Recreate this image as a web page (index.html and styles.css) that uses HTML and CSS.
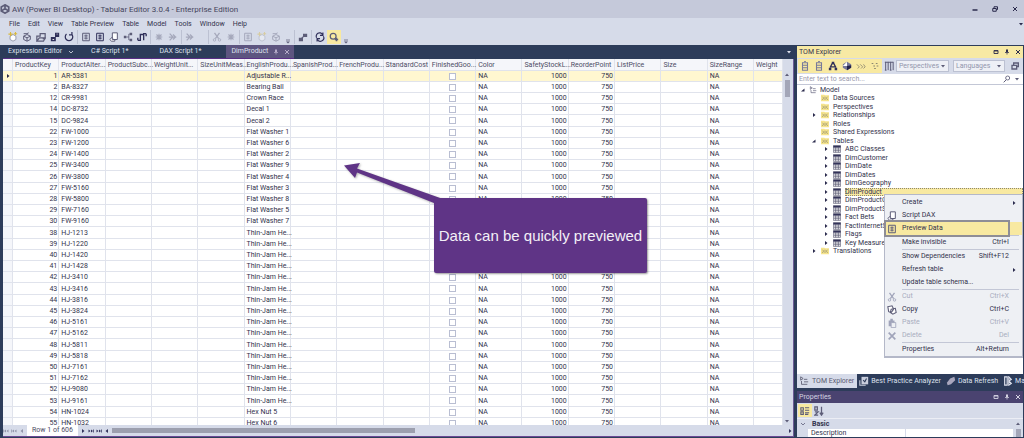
FILE: index.html
```html
<!DOCTYPE html>
<html lang="en">
<head>
<meta charset="utf-8">
<title>AW (Power BI Desktop) - Tabular Editor 3.0.4 - Enterprise Edition</title>
<link rel="stylesheet" href="styles.css">
</head>
<body>
<svg class="defs" aria-hidden="true">
  <symbol id="i-logo" viewBox="0 0 12 12"><path d="M6 1l4.500 2.500v5L6 11 1.500 8.500v-5z M6 1v4.500M1.500 8.500L6 5.500l4.500 3" fill="none" stroke="currentColor" stroke-width="2"/></symbol>
  <symbol id="i-new" viewBox="0 0 12 12"><path d="M6 3l3.500 2v4L6 11 2.500 9V5z" fill="#fff" stroke="#8a8ea2"/><path d="M3 0v5M.5 2.500h5M7 2h4M9 0v4" stroke="#d9b83c" stroke-width="1.300"/></symbol>
  <symbol id="i-cube" viewBox="0 0 12 12"><path d="M6 3l4 2v4l-4 2-4-2V5zM2 5l4 2 4-2M6 7v4M2 2h4l2-1" fill="none" stroke="currentColor" stroke-width="1.200"/></symbol>
  <symbol id="i-open" viewBox="0 0 12 12"><path d="M1 11V5h4V2h6v6H8M1 11h8l2-4H4z" fill="none" stroke="currentColor" stroke-width="1.500"/></symbol>
  <symbol id="i-save" viewBox="0 0 12 12"><path d="M6 1h5v5H6zM1 6h6v5H1z" fill="currentColor"/><path d="M3 9h2M8 2.500h1" stroke="#fff"/></symbol>
  <symbol id="i-refresh" viewBox="0 0 12 12"><path d="M3 2.500a4.500 4.500 0 1 0 6 0M9.500 0v3.500H6" fill="none" stroke="currentColor" stroke-width="1.500"/></symbol>
  <symbol id="i-script" viewBox="0 0 12 12"><path d="M2 1.500h8v9H2z" fill="none" stroke="currentColor" stroke-width="1.200"/><path d="M4 4h4M4 6h4M4 8h4M6 3v6" stroke="currentColor"/></symbol>
  <symbol id="i-doc" viewBox="0 0 12 12"><path d="M4 1h6v8H4zM4 6L1 9l2 2h4V9" fill="#fff" stroke="currentColor" stroke-width="1.200"/></symbol>
  <symbol id="i-diagram" viewBox="0 0 12 12"><path d="M1 4.500h3v3H1zM8 1h3v3H8zM8 8h3v3H8z" fill="currentColor"/><path d="M4 6h3M8 2.500H7v7h1" fill="none" stroke="currentColor"/></symbol>
  <symbol id="i-pivot" viewBox="0 0 12 12"><path d="M1 10h3V3h4M8 10V2h3M1 10V7M11 2v3" fill="none" stroke="currentColor" stroke-width="1.600"/></symbol>
  <symbol id="i-cut" viewBox="0 0 12 12"><path d="M3 1l5 7M9 1L4 8" stroke="currentColor" stroke-width="1.500"/><circle cx="3" cy="9.500" r="1.500" fill="none" stroke="currentColor"/><circle cx="9" cy="9.500" r="1.500" fill="none" stroke="currentColor"/></symbol>
  <symbol id="i-copy" viewBox="0 0 12 12"><path d="M1 2l5-1 2 4-3 4-3-1zM5 5l5-1 1 5-4 2-3-2z" fill="#fff" stroke="currentColor" stroke-width="1.300"/></symbol>
  <symbol id="i-paste" viewBox="0 0 12 12"><path d="M2 3h7v7H2zM4 1h3v2H4z" fill="currentColor"/><path d="M5 5.500h5.500v6H5z" fill="#eef0f4" stroke="currentColor"/></symbol>
  <symbol id="i-x" viewBox="0 0 12 12"><path d="M2 2l8 8M10 2l-8 8" stroke="currentColor" stroke-width="2"/></symbol>
  <symbol id="i-gray" viewBox="0 0 12 12"><path d="M2 2l4 4-4 4M6 3l3 3-3 3M1 6h9" fill="none" stroke="currentColor" stroke-width="1.500"/></symbol>
  <symbol id="i-burst" viewBox="0 0 12 12"><path d="M6 2v8M2 6h8M3 3l6 6M9 3L3 9" stroke="currentColor" stroke-width="1.300"/></symbol>
  <symbol id="i-link" viewBox="0 0 12 12"><path d="M1 7h5v4H1zM6 2h5v4H6z" fill="currentColor"/><path d="M4 8l4-4" stroke="currentColor" stroke-width="1.500"/></symbol>
  <symbol id="i-sync" viewBox="0 0 12 12"><path d="M2 7a4 4 0 0 1 7-4M10 5a4 4 0 0 1-7 4M9.500.5V4H6M2.500 11.500V8H6" fill="none" stroke="currentColor" stroke-width="1.400"/></symbol>
  <symbol id="i-find" viewBox="0 0 12 12"><circle cx="5" cy="5" r="3.500" fill="none" stroke="currentColor" stroke-width="1.500"/><path d="M7 9h4M9 7v4" stroke="currentColor" stroke-width="1.800"/></symbol>
  <symbol id="i-drop" viewBox="0 0 12 12"><path d="M2 4h8l-4 5z" fill="currentColor"/></symbol>
  <symbol id="i-more" viewBox="0 0 12 12"><path d="M2 4h8" stroke="currentColor" stroke-width="1.500"/><path d="M2 7h8l-4 4z" fill="currentColor"/></symbol>
  <symbol id="i-right" viewBox="0 0 12 12"><path d="M4 2v8l5-4z" fill="currentColor"/></symbol>
  <symbol id="i-left" viewBox="0 0 12 12"><path d="M8 2v8L3 6z" fill="currentColor"/></symbol>
  <symbol id="i-next" viewBox="0 0 12 12"><path d="M1 3v6l4-3zM6 3v6l4-3z" fill="currentColor"/><path d="M11 3v6" stroke="currentColor" stroke-width="1.500"/></symbol>
  <symbol id="i-prev" viewBox="0 0 12 12"><path d="M11 3v6L7 6zM6 3v6L2 6z" fill="currentColor"/><path d="M1 3v6" stroke="currentColor" stroke-width="1.500"/></symbol>
  <symbol id="i-up" viewBox="0 0 12 12"><path d="M2 8h8L6 3z" fill="currentColor"/></symbol>
  <symbol id="i-open-node" viewBox="0 0 12 12"><path d="M9 3v6H2z" fill="currentColor"/></symbol>
  <symbol id="i-min" viewBox="0 0 12 12"><path d="M1 8h10" stroke="currentColor" stroke-width="3"/></symbol>
  <symbol id="i-restore" viewBox="0 0 12 12"><path d="M4 4V1.500h7V7H8.500M1.500 5h7v5.500h-7z" fill="none" stroke="currentColor" stroke-width="2"/></symbol>
  <symbol id="i-window" viewBox="0 0 12 12"><path d="M2 3h8v6H2zM2 4h8" fill="none" stroke="currentColor" stroke-width="1.800"/></symbol>
  <symbol id="i-pin" viewBox="0 0 12 12"><path d="M4 1h4v5H4z" fill="currentColor"/><path d="M2 7h8M6 7v4" stroke="currentColor" stroke-width="1.500"/></symbol>
  <symbol id="i-db" viewBox="0 0 12 12"><path d="M3 2h6v9H3zM3 5h6M3 8h6M5 .5h2" fill="none" stroke="#77799a" stroke-width="1.300"/></symbol>
  <symbol id="i-hier" viewBox="0 0 12 12"><path d="M4.500 1h3v3h-3zM1 8h3v3H1zM8 8h3v3H8z" fill="currentColor"/><path d="M5 3L2.500 8M7 3l2.500 5M3 7h6" stroke="currentColor" stroke-width="1.600"/></symbol>
  <symbol id="i-ball" viewBox="0 0 12 12"><path d="M6 1l5 3v4l-5 3-5-3V4z" fill="#77799a"/><path d="M1 6l5-5v5z" fill="#fff"/><path d="M6 6l5-1v3l-5 3z" fill="#22224a"/></symbol>
  <symbol id="i-dots" viewBox="0 0 12 12"><path d="M1 4l3 3-2 2M5 4l3 3-2 2M9 4l2 3-2 2" fill="none" stroke="#8a8670"/></symbol>
  <symbol id="i-dots2" viewBox="0 0 12 12"><path d="M2 3h2M7 3h2M4 6h2M8 6h2M5 9h2" fill="none" stroke="#8a8670" stroke-width="1.300"/></symbol>
  <symbol id="i-cols" viewBox="0 0 12 12"><path d="M1 1.500h10M2 1v10M5 1v10M8 1v10M11 1v10M1 11h2M7 11h2" stroke="currentColor" stroke-width="1.200"/></symbol>
  <symbol id="i-folder" viewBox="0 0 12 12"><path d="M0 1h5l1 1h6v9H0z" fill="#f6e48c"/><path d="M2 4l2 2-2 3M6 4v5M10 4L8 6l2 3" fill="none" stroke="#8a8670"/></symbol>
  <symbol id="i-table" viewBox="0 0 12 12"><path d="M.5 1h11v10H.5z" fill="#fff" stroke="#54546e"/><path d="M.5 2.500h11" stroke="#34345a" stroke-width="3"/><path d="M4 3v8M8 3v8M1 6h10M1 8.500h10" stroke="#54546e"/></symbol>
  <symbol id="i-model" viewBox="0 0 12 12"><path d="M2 1l3 2-3 2zM3 6v4h3M6 7h5M6 10h4M6 4h4" fill="none" stroke="currentColor"/></symbol>
  <symbol id="i-check" viewBox="0 0 12 12"><path d="M3 1h8v9H3z" fill="#c9cedd"/><path d="M5 5l2 2 2-4" fill="none" stroke="#2d3c5a" stroke-width="1.300"/><path d="M1 5v6h7" fill="none" stroke="#c9cedd" stroke-width="1.300"/></symbol>
  <symbol id="i-data" viewBox="0 0 12 12"><path d="M1 8l4-5 5-2 1 4-5 5-4 1z" fill="#a9a7bd"/></symbol>
  <symbol id="i-macro" viewBox="0 0 12 12"><path d="M2 1h3v10H2zM7 1l3 3-3 2 3 3-3 2z" fill="none" stroke="currentColor" stroke-width="1.400"/></symbol>
  <symbol id="i-cat" viewBox="0 0 12 12"><path d="M1 2h3v3H1zM1 7h3v3H1zM6 2h5M6 5h5M6 8h5M6 10h4" fill="none" stroke="currentColor" stroke-width="1.300"/></symbol>
  <symbol id="i-sort" viewBox="0 0 12 12"><path d="M1 1h3v4H1zM1 7h4l-4 4h4M9 1v9M7 8l2 3 2-3" fill="none" stroke="currentColor" stroke-width="1.500"/></symbol>
  <symbol id="i-search" viewBox="0 0 12 12"><circle cx="7" cy="4.500" r="3" fill="none" stroke="currentColor" stroke-width="1.300"/><path d="M5 7l-4 4" stroke="currentColor" stroke-width="1.500"/></symbol>
  <symbol id="i-chev" viewBox="0 0 12 12"><path d="M2 4l4 4 4-4" fill="none" stroke="currentColor" stroke-width="1.600"/></symbol>
</svg>

<div class="window">
  <header class="titlebar">
    <svg class="icon"><use href="#i-logo"/></svg>
    <h1>AW (Power BI Desktop) - Tabular Editor 3.0.4 - Enterprise Edition</h1>
    <div class="window-buttons">
      <button aria-label="Minimize"><svg class="icon tiny"><use href="#i-min"/></svg></button>
      <button aria-label="Restore"><svg class="icon tiny"><use href="#i-restore"/></svg></button>
      <button aria-label="Close"><svg class="icon tiny"><use href="#i-x"/></svg></button>
    </div>
  </header>

  <nav class="menubar">
    <button>File</button><button>Edit</button><button>View</button><button>Table Preview</button><button>Table</button><button>Model</button><button>Tools</button><button>Window</button><button>Help</button>
    <svg class="icon tiny overflow"><use href="#i-drop"/></svg>
  </nav>

  <div class="toolbar" role="toolbar" aria-label="Main">
    <div class="group">
      <button aria-label="New"><svg class="icon"><use href="#i-new"/></svg></button>
      <button aria-label="Open model"><svg class="icon"><use href="#i-cube"/></svg></button>
      <button aria-label="Open file"><svg class="icon"><use href="#i-open"/></svg></button>
      <button aria-label="Save"><svg class="icon strong"><use href="#i-save"/></svg></button>
      <button aria-label="Refresh"><svg class="icon strong"><use href="#i-refresh"/></svg></button>
    </div>
    <div class="group">
      <button aria-label="New script"><svg class="icon"><use href="#i-script"/></svg></button>
      <button aria-label="New query"><svg class="icon strong"><use href="#i-script"/></svg></button>
      <button aria-label="New document"><svg class="icon"><use href="#i-doc"/></svg></button>
      <button aria-label="New diagram"><svg class="icon"><use href="#i-diagram"/></svg></button>
      <button aria-label="New pivot"><svg class="icon strong"><use href="#i-pivot"/></svg></button>
    </div>
    <div class="group faded">
      <button aria-label="Undo"><svg class="icon"><use href="#i-burst"/></svg></button>
      <button aria-label="Redo"><svg class="icon"><use href="#i-gray"/></svg></button>
    </div>
    <div class="group faded wide">
      <button aria-label="Run"><svg class="icon"><use href="#i-gray"/></svg></button>
    </div>
    <div class="group faded">
      <button aria-label="Cut"><svg class="icon"><use href="#i-cut"/></svg></button>
      <button aria-label="Delete"><svg class="icon"><use href="#i-burst"/></svg></button>
    </div>
    <div class="group faded">
      <button aria-label="Back"><svg class="icon"><use href="#i-script"/></svg></button>
      <button aria-label="Step"><svg class="icon"><use href="#i-new"/></svg></button>
      <button aria-label="Continue"><svg class="icon"><use href="#i-cube"/></svg></button>
      <button class="slim" aria-label="More"><svg class="icon tiny"><use href="#i-more"/></svg></button>
    </div>
    <div class="group">
      <button aria-label="Connect"><svg class="icon"><use href="#i-link"/></svg></button>
    </div>
    <div class="group">
      <button aria-label="Reload"><svg class="icon strong"><use href="#i-sync"/></svg></button>
      <button class="on" aria-label="Auto refresh"><svg class="icon"><use href="#i-find"/></svg></button>
      <button class="slim" aria-label="More"><svg class="icon tiny"><use href="#i-more"/></svg></button>
    </div>
  </div>

  <main class="workspace">
    <section class="documents">
      <div class="doc-tabs" role="tablist">
        <button role="tab" class="first">Expression Editor <svg class="icon tiny"><use href="#i-chev"/></svg></button>
        <button role="tab">C# Script 1*</button>
        <button role="tab">DAX Script 1*</button>
        <button role="tab" class="active">DimProduct <svg class="icon tiny"><use href="#i-pin"/></svg><svg class="icon tiny"><use href="#i-x"/></svg></button>
        <svg class="icon tiny overflow"><use href="#i-drop"/></svg>
      </div>
      <div class="preview">
        <div class="grid-scroll">
          <table class="grid">
            <colgroup><col class="c-mark"><col span="16"><col class="c-last"></colgroup>
            <thead><tr><th></th><th>ProductKey</th><th>ProductAlter...</th><th>ProductSubc...</th><th>WeightUnit...</th><th>SizeUnitMeas...</th><th>EnglishProdu...</th><th>SpanishProd...</th><th>FrenchProdu...</th><th>StandardCost</th><th>FinishedGoo...</th><th>Color</th><th>SafetyStockL...</th><th>ReorderPoint</th><th>ListPrice</th><th>Size</th><th>SizeRange</th><th>Weight</th></tr></thead>
            <tbody id="rows"></tbody>
          </table>
        </div>
        <div class="vscroll">
          <svg class="icon tiny"><use href="#i-up"/></svg>
          <span class="thumb"></span>
          <svg class="icon tiny bottom"><use href="#i-drop"/></svg>
        </div>
        <div class="navigator">
          <button disabled aria-label="First"><svg class="icon tiny"><use href="#i-prev"/></svg></button>
          <button disabled aria-label="Previous page"><svg class="icon tiny"><use href="#i-prev"/></svg></button>
          <button disabled aria-label="Previous"><svg class="icon tiny"><use href="#i-left"/></svg></button>
          <span class="position">Row 1 of 606</span>
          <button aria-label="Next"><svg class="icon tiny"><use href="#i-right"/></svg></button>
          <button aria-label="Next page"><svg class="icon tiny"><use href="#i-next"/></svg></button>
          <button aria-label="Last"><svg class="icon tiny"><use href="#i-next"/></svg></button>
          <button aria-label="Scroll left"><svg class="icon tiny"><use href="#i-left"/></svg></button>
          <span class="track"><span class="thumb"></span></span>
          <button aria-label="Scroll right"><svg class="icon tiny"><use href="#i-right"/></svg></button>
        </div>
      </div>
    </section>

    <aside class="side">
      <section class="explorer">
        <header class="panel-title"><h2>TOM Explorer</h2>
          <svg class="icon tiny"><use href="#i-window"/></svg><svg class="icon tiny"><use href="#i-pin"/></svg><svg class="icon tiny"><use href="#i-x"/></svg>
        </header>
        <div class="panel-tools" role="toolbar" aria-label="Explorer">
          <div class="toggles">
            <button aria-label="Measures"><svg class="icon"><use href="#i-db"/></svg></button>
            <button aria-label="Columns"><svg class="icon"><use href="#i-db"/></svg></button>
            <button aria-label="Hierarchies"><svg class="icon strong"><use href="#i-hier"/></svg></button>
            <button aria-label="Partitions"><svg class="icon"><use href="#i-ball"/></svg></button>
            <button aria-label="Folders"><svg class="icon"><use href="#i-dots"/></svg></button>
            <button aria-label="Hidden"><svg class="icon"><use href="#i-dots2"/></svg></button>
          </div>
          <button aria-label="Show columns"><svg class="icon"><use href="#i-cols"/></svg></button>
          <span class="picker"><select aria-label="Perspectives"><option>Perspectives</option></select><svg class="icon tiny"><use href="#i-drop"/></svg></span>
          <span class="picker"><select aria-label="Languages"><option>Languages</option></select><svg class="icon tiny"><use href="#i-drop"/></svg></span>
          <button class="copies" aria-label="Copies"><svg class="icon small"><use href="#i-restore"/></svg></button>
        </div>
        <div class="search">
          <input type="text" aria-label="Search" placeholder="Enter text to search...">
          <svg class="icon small"><use href="#i-search"/></svg><svg class="icon tiny"><use href="#i-drop"/></svg>
        </div>
        <ul class="tree" id="tree"></ul>
      </section>

      <div class="panel-tabs" role="tablist">
        <button role="tab" class="active"><svg class="icon"><use href="#i-model"/></svg>TOM Explorer</button>
        <button role="tab"><svg class="icon"><use href="#i-check"/></svg>Best Practice Analyzer</button>
        <button role="tab"><svg class="icon"><use href="#i-data"/></svg>Data Refresh</button>
        <button role="tab"><svg class="icon"><use href="#i-macro"/></svg>Macros</button>
      </div>

      <section class="properties">
        <header class="panel-title dark"><h2>Properties</h2>
          <svg class="icon tiny"><use href="#i-window"/></svg><svg class="icon tiny"><use href="#i-pin"/></svg><svg class="icon tiny"><use href="#i-x"/></svg>
        </header>
        <div class="prop-tools">
          <button class="on" aria-label="Categorized"><svg class="icon"><use href="#i-cat"/></svg></button>
          <button aria-label="Alphabetical"><svg class="icon"><use href="#i-sort"/></svg></button>
        </div>
        <div class="prop-body">
          <div class="prop-list">
            <div class="category"><svg class="icon tiny"><use href="#i-chev"/></svg>Basic</div>
            <div class="prop"><label for="description">Description</label><input id="description" type="text"></div>
          </div>
          <div class="vscroll"><svg class="icon tiny"><use href="#i-up"/></svg><span class="thumb"></span></div>
        </div>
      </section>
    </aside>
  </main>

  <div class="context-menu" role="menu">
    <button role="menuitem"><span class="gutter"></span>Create<svg class="icon tiny arrow"><use href="#i-right"/></svg></button>
    <button role="menuitem"><span class="gutter"><svg class="icon"><use href="#i-doc"/></svg></span>Script DAX</button>
    <button role="menuitem" class="hot"><span class="gutter"><svg class="icon"><use href="#i-script"/></svg></span>Preview Data</button>
    <hr>
    <button role="menuitem"><span class="gutter"></span>Make invisible<kbd>Ctrl+I</kbd></button>
    <hr>
    <button role="menuitem"><span class="gutter"></span>Show Dependencies<kbd>Shift+F12</kbd></button>
    <button role="menuitem"><span class="gutter"></span>Refresh table<svg class="icon tiny arrow"><use href="#i-right"/></svg></button>
    <button role="menuitem"><span class="gutter"></span>Update table schema...</button>
    <hr>
    <button role="menuitem" disabled><span class="gutter"><svg class="icon"><use href="#i-cut"/></svg></span>Cut<kbd>Ctrl+X</kbd></button>
    <button role="menuitem"><span class="gutter"><svg class="icon"><use href="#i-copy"/></svg></span>Copy<kbd>Ctrl+C</kbd></button>
    <button role="menuitem" disabled><span class="gutter"><svg class="icon"><use href="#i-paste"/></svg></span>Paste<kbd>Ctrl+V</kbd></button>
    <button role="menuitem" disabled><span class="gutter"><svg class="icon"><use href="#i-x"/></svg></span>Delete<kbd>Del</kbd></button>
    <hr>
    <button role="menuitem"><span class="gutter"></span>Properties<kbd>Alt+Return</kbd></button>
  </div>

  <svg class="pointer" viewBox="0 0 108 44" aria-hidden="true"><path d="M3 6.500L19 4l-3 5.500L102 40v4H93L16 13.500 14 19z" fill="#5f3486"/></svg>
  <div class="callout">Data can be quickly previewed</div>
</div>
<script src="app.js"></script>
</body>
</html>
```

FILE: styles.css
```css
* { box-sizing: border-box; }

html, body { height: 100%; }

body {
  margin: 0;
  font-family: Roboto, "Open Sans", sans-serif;
  font-size: 7px;
  line-height: 11px;
  color: #32324c;
  background: #2d3c5a;
  overflow: hidden;
}

button, input, select {
  font: inherit;
  color: inherit;
  margin: 0;
  padding: 0;
  border: 0;
  background: none;
}

h1, h2 { margin: 0; font-weight: 400; font-size: inherit; }

.defs { display: none; }
.icon { width: 10px; height: 10px; flex: none; color: #5d5d78; }
.icon.small { width: 8px; height: 8px; }
.icon.tiny { width: 6px; height: 6px; }
.icon.strong { color: #30305a; }

.window { position: relative; display: flex; flex-direction: column; height: 100%; }

.titlebar {
  display: flex;
  align-items: center;
  gap: 2px;
  height: 18px;
  flex: none;
  padding: 0 6px 0 0;
  background: #c5c9da;
  color: #45455c;
}
.titlebar h1 { font-size: 8px; flex: 1; }
.window-buttons { display: flex; gap: 14px; }
.window-buttons button { display: flex; }
.window-buttons .icon { color: #2a2a4c; }

.menubar {
  display: flex;
  align-items: center;
  gap: 8px;
  height: 12px;
  flex: none;
  padding: 0 0 0 9px;
  background: #d6dbe9;
}
.overflow { margin-left: auto; color: #2a2a4c; }

.toolbar {
  display: flex;
  align-items: center;
  height: 15px;
  flex: none;
  padding: 0 0 1px 5px;
  background: #d6dbe9;
}
.group { display: flex; padding: 0 1px; }
.group + .group { border-left: 1px solid #bcc1d2; }
.group button {
  width: 14px;
  height: 14px;
  display: flex;
  align-items: center;
  justify-content: center;
}
.group button.slim { width: 10px; align-items: flex-end; }
.group.faded .icon { opacity: 0.4; }
.group.faded .icon.tiny { opacity: 1; }
.group.wide { padding-right: 11px; }
.group button.on, .on { background: #f8e9a1; }

.workspace {
  flex: 1;
  min-height: 0;
  display: grid;
  grid-template-columns: minmax(0, 1fr) 226px;
  gap: 3px;
  padding: 0 1px 1px 3px;
}

.documents { display: flex; flex-direction: column; min-height: 0; }
.doc-tabs {
  display: flex;
  align-items: center;
  height: 14px;
  flex: none;
  color: #dfe2ee;
}
.doc-tabs button {
  display: flex;
  align-items: center;
  gap: 6px;
  height: 14px;
  padding: 0 24px 0 7px;
  white-space: nowrap;
  border-bottom: 1px solid #5a2f86;
}
.doc-tabs .icon { color: #dfe2ee; }
.doc-tabs .overflow { margin-right: 2px; }
.doc-tabs button.first { padding: 0 10px 0 5px; }
.doc-tabs button.active { padding: 0 4px 0 6px; background: #5d5580; gap: 5px; }
.doc-tabs button.active .icon { color: #b5abc9; }

.preview {
  flex: 1;
  min-height: 0;
  display: grid;
  grid-template-columns: minmax(0, 1fr) 10px;
  grid-template-rows: minmax(0, 1fr) 11px;
  border-right: 1px solid #6b5a94;
  border-bottom: 1px solid #6b4a94;
  background: #d6dbe9;
}
.grid-scroll { overflow: hidden; background: #fff; }

.grid { width: 100%; table-layout: fixed; border-collapse: separate; border-spacing: 0; }
.c-mark { width: 10px; }
.c-last { width: 29px; }
.grid th, .grid td {
  height: 11px;
  padding: 0 0 0 2px;
  line-height: 10px;
  font-weight: 400;
  text-align: left;
  white-space: nowrap;
  border-right: 1px solid #e0e3ec;
  border-bottom: 1px solid #e0e3ec;
}
.grid th { height: 12px; background: #f5f6fa; color: #4c4c64; }
.grid tr:nth-child(5n) td { height: 12px; }
.grid .num { text-align: right; padding-right: 1px; }
.grid .mark { padding: 0; text-align: center; background: #f5f6fa; }
.grid .mark .icon { display: block; margin: auto; color: #2a2a4c; }
.grid .current td { background: #fff7d0; }
.grid .flag { padding: 0; }
.grid input {
  appearance: none;
  display: block;
  width: 7px;
  height: 7px;
  margin: auto;
  border: 1px solid #b9bed2;
  background: #fff;
}

.vscroll {
  display: flex;
  flex-direction: column;
  align-items: center;
  gap: 2px;
  padding: 13px 2px 1px 0;
}
.vscroll .thumb { width: 5px; height: 17px; background: #a3a6b8; }
.vscroll .bottom { margin-top: auto; }

.navigator {
  grid-column: 1 / -1;
  display: flex;
  align-items: center;
  gap: 2px;
}
.navigator button { display: flex; width: 6px; }
.navigator button .icon { color: #33335c; }
.navigator button:disabled .icon { color: #9195aa; }
.position { padding: 0 5px; background: #fff; color: #4c4c64; white-space: nowrap; }
.track { flex: 1; height: 5px; }
.track .thumb { display: block; width: 45%; height: 5px; background: #9c9fae; }

.side { display: flex; flex-direction: column; min-height: 0; padding-top: 1px; }
.explorer { display: flex; flex-direction: column; flex: 1; min-height: 0; background: #fff; }
.panel-title {
  display: flex;
  align-items: center;
  gap: 5px;
  height: 12px;
  flex: none;
  padding: 0 2px;
  background: #f7e9a4;
}
.panel-title h2 { flex: 1; }
.panel-title .icon { color: #2a2a4c; }
.panel-title.dark { background: #4a4370; color: #d5d3e2; }
.panel-title.dark .icon { color: #d5d3e2; }

.panel-tools {
  display: flex;
  align-items: center;
  gap: 2px;
  height: 16px;
  flex: none;
  padding: 0 0 0 1px;
  background: #d6dbe9;
}
.panel-tools button, .prop-tools button {
  display: flex;
  align-items: center;
  justify-content: center;
}
.panel-tools .copies { width: 16px; }
.toggles { display: flex; height: 14px; background: #f8e9a1; }
.toggles button { width: 14px; }
.picker {
  flex: 1;
  display: flex;
  align-items: center;
  height: 12px;
  padding-right: 2px;
  background: #eef0f6;
  border: 1px solid #bcc1d2;
}
.picker + .picker { margin-left: 2px; }
.picker select { appearance: none; flex: 1; min-width: 0; padding-left: 2px; color: #9296ac; line-height: 10px; }

.search { display: flex; align-items: center; gap: 3px; height: 11px; flex: none; padding: 0 3px 0 2px; border-bottom: 1px solid #c3c7d6; }
.search input { flex: 1; min-width: 0; outline: 0; }
.search input::placeholder { color: #9a9aae; opacity: 1; }

.tree { list-style: none; margin: 0; padding: 0; line-height: 8px; }
.tree li { display: flex; align-items: center; height: 9px; gap: 3px; padding-left: 3px; }
.tree li:nth-child(even) { height: 8px; }
.tree .icon { width: 8px; height: 8px; }
.tree .toggle { width: 6px; height: 6px; color: #2a2a4c; }
.tree .gap { width: 6px; flex: none; }
.tree .l1 { padding-left: 14px; gap: 4px; }
.tree .l2 { padding-left: 26px; gap: 4px; }
.tree .selected span { flex: 1; background: #f8e9a1; outline: 1px dotted #8f8870; outline-offset: -1px; }

.panel-tabs { display: flex; flex: none; height: 14px; color: #dfe2ee; }
.panel-tabs button { display: flex; align-items: center; gap: 2px; padding: 0 3px 0 2px; white-space: nowrap; }
.panel-tabs button .icon { color: #dfe2ee; }
.panel-tabs .active { gap: 3px; background: #d6dbe9; color: #5a5a70; }
.panel-tabs .active .icon { color: #5a5a70; }

.properties { flex: none; margin-top: 3px; background: #fff; }
.prop-tools { display: flex; height: 16px; padding: 1px; background: #d6dbe9; border-bottom: 1px solid #eceef5; }
.prop-tools button { width: 14px; }
.prop-body { display: flex; background: #d6dbe9; }
.prop-list { flex: 1; }
.prop-body .vscroll { height: 18px; padding: 2px 2px 0 2px; overflow: hidden; }
.category { display: flex; align-items: center; gap: 6px; height: 10px; padding-left: 3px; font-weight: 700; }
.prop { display: grid; grid-template-columns: 94px 1fr; height: 8px; margin-left: 11px; padding-left: 3px; line-height: 8px; background: #fff; overflow: hidden; }
.prop input { min-width: 0; height: 8px; border-left: 1px solid #d6dbe9; }

.context-menu {
  position: absolute;
  top: 194px;
  right: 1px;
  width: 139px;
  padding: 1px 0 0;
  background: #eef0f4;
  border: 1px solid #b4b8c8;
  border-bottom-width: 2px;
}
.context-menu button { display: flex; align-items: center; width: 100%; height: 13px; padding-right: 13px; white-space: nowrap; }
.context-menu button:disabled { color: #a9adc0; }
.context-menu button:disabled .icon { color: #a0a4ba; }
.context-menu .gutter { width: 17px; display: flex; align-items: center; padding-left: 2px; flex: none; }
.context-menu kbd { margin-left: auto; font: inherit; }
.context-menu .arrow { margin-left: auto; margin-right: -8px; color: #2a2a4c; }
.context-menu hr { margin: 0 3px 0 17px; border: 0; height: 1px; background: #c3c7d6; }
.context-menu .hot { position: relative; background: #f8e9a1; }
.context-menu .hot::after {
  content: "";
  position: absolute;
  inset: -2px 12px -2px -1px;
  border: 2px solid #8e8d96;
}

.pointer { position: absolute; left: 341px; top: 159px; width: 108px; height: 44px; filter: drop-shadow(1px 1px 1px rgba(0, 0, 0, 0.3)); }
.callout {
  position: absolute;
  left: 434px;
  top: 198px;
  width: 213px;
  height: 75px;
  display: flex;
  align-items: center;
  justify-content: center;
  border-radius: 2px;
  background: #5f3486;
  color: #f3f0f7;
  font: 15px/16px "Liberation Sans", Arial, sans-serif;
  white-space: nowrap;
  box-shadow: 1px 1px 2px rgba(0, 0, 0, 0.4);
}
```

FILE: app.js
```javascript
const thinJam = "Thin-Jam He...";
const products = [
  [1, "AR-5381", "Adjustable R..."], [2, "BA-8327", "Bearing Ball"], [12, "CR-9981", "Crown Race"],
  [14, "DC-8732", "Decal 1"], [15, "DC-9824", "Decal 2"], [22, "FW-1000", "Flat Washer 1"],
  [23, "FW-1200", "Flat Washer 6"], [24, "FW-1400", "Flat Washer 2"], [25, "FW-3400", "Flat Washer 9"],
  [26, "FW-3800", "Flat Washer 4"], [27, "FW-5160", "Flat Washer 3"], [28, "FW-5800", "Flat Washer 8"],
  [29, "FW-7160", "Flat Washer 5"], [30, "FW-9160", "Flat Washer 7"], [38, "HJ-1213", thinJam],
  [39, "HJ-1220", thinJam], [40, "HJ-1420", thinJam], [41, "HJ-1428", thinJam], [42, "HJ-3410", thinJam],
  [43, "HJ-3416", thinJam], [44, "HJ-3816", thinJam], [45, "HJ-3824", thinJam], [46, "HJ-5161", thinJam],
  [47, "HJ-5162", thinJam], [48, "HJ-5811", thinJam], [49, "HJ-5818", thinJam], [50, "HJ-7161", thinJam],
  [51, "HJ-7162", thinJam], [52, "HJ-9080", thinJam], [53, "HJ-9161", thinJam], [54, "HN-1024", "Hex Nut 5"],
  [55, "HN-1032", "Hex Nut 6"]
];

const icon = (name, cls = "") => `<svg class="icon ${cls}"><use href="#i-${name}"/></svg>`;

document.getElementById("rows").innerHTML = products.map(([key, code, name], i) => `
  <tr class="${i === 0 ? "current" : ""}">
    <td class="mark">${i === 0 ? icon("right", "tiny") : ""}</td>
    <td class="num">${key}</td><td>${code}</td><td></td><td></td><td></td><td>${name}</td>
    <td></td><td></td><td></td>
    <td class="flag"><input type="checkbox" aria-label="Finished goods, ${code}"></td>
    <td>NA</td><td class="num">1000</td><td class="num">750</td><td></td><td></td><td>NA</td><td></td>
  </tr>`).join("");

// [level, label, icon, toggle]
const nodes = [
  [0, "Model", "model", "open-node"],
  [1, "Data Sources", "folder"], [1, "Perspectives", "folder"], [1, "Relationships", "folder", "right"],
  [1, "Roles", "folder"], [1, "Shared Expressions", "folder"], [1, "Tables", "folder", "open-node"],
  ...["ABC Classes", "DimCustomer", "DimDate", "DimDates", "DimGeography", "DimProduct", "DimProductCategory",
    "DimProductSubcategory", "Fact Bets", "FactInternetSales", "Flags", "Key Measures"]
    .map(label => [2, label, "table", "right"]),
  [1, "Translations", "folder", "right"]
];

document.getElementById("tree").innerHTML = nodes.map(([level, label, glyph, toggle]) => `
  <li class="l${level}${label === "DimProduct" ? " selected" : ""}">
    ${toggle ? icon(toggle, "toggle") : '<i class="gap"></i>'}${icon(glyph)}<span>${label}</span>
  </li>`).join("");
```
